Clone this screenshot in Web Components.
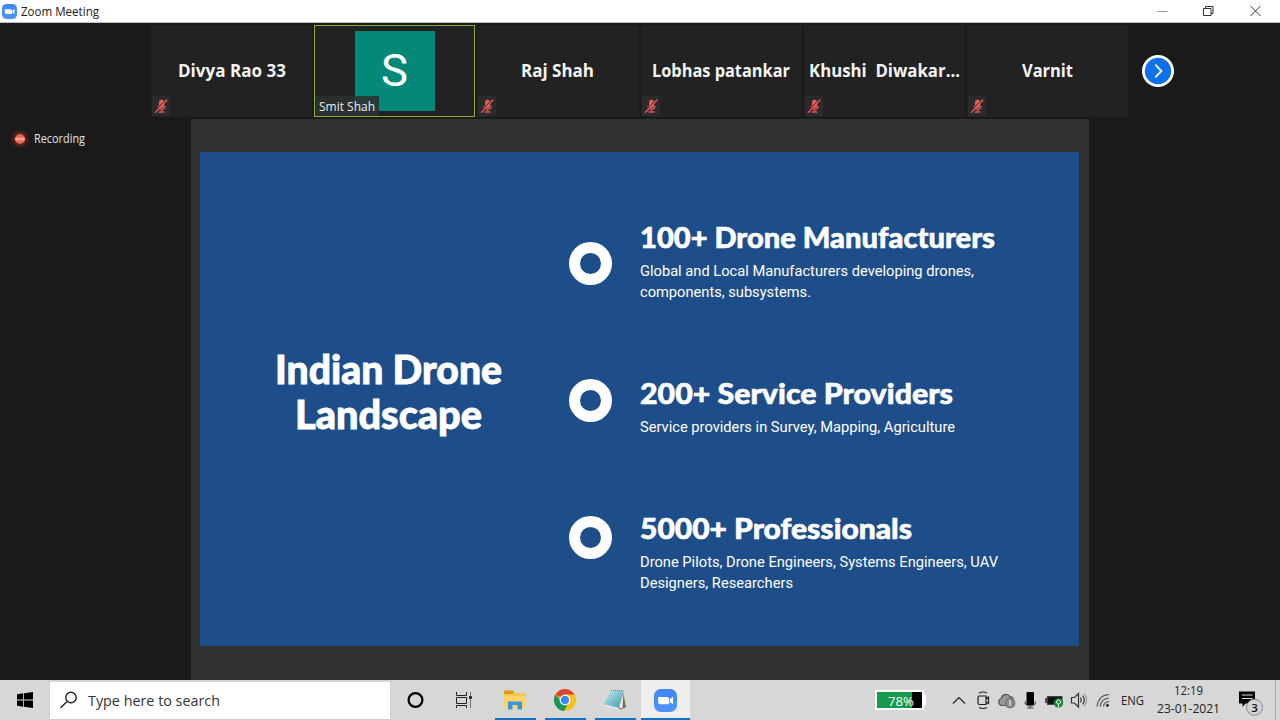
<!DOCTYPE html>
<html lang="en">
<head>
<meta charset="utf-8">
<title>Zoom Meeting</title>
<style>
html,body{margin:0;height:100%;overflow:hidden;background:#1a1a1a}
body{font-family:"Open Sans","Noto Sans",sans-serif}
</style>
</head>
<body>
<meeting-desktop></meeting-desktop>
<script>
const define=(name,html,ready)=>customElements.define(name,class extends HTMLElement{
  connectedCallback(){
    if(this.shadowRoot)return;
    this.attachShadow({mode:'open'}).innerHTML=typeof html==='function'?html(this):html;
    if(ready)ready(this);
  }
});

/* One line of text condensed or widened to a given width. */
define('fit-text',`<style>
:host{display:block;white-space:pre}
span{display:inline-block;transform-origin:0 50%}
</style><span><slot></slot></span>`,el=>{
  const w=parseFloat(el.getAttribute('w')),s=el.shadowRoot.querySelector('span');
  s.style.transform=`scaleX(${w/s.getBoundingClientRect().width})`;
  el.style.width=w+'px';
});

define('zoom-logo',el=>`<style>:host{display:block;flex:none}svg{display:block}</style>
<svg width="${el.getAttribute('size')}" height="${el.getAttribute('size')}" viewBox="0 0 22 22">
<defs><linearGradient id="g" x2="0" y2="1"><stop stop-color="#3f86f2"/><stop offset="1" stop-color="#5095ff"/></linearGradient></defs>
<rect width="22" height="22" rx="6.5" fill="url(#g)"/>
<path fill="#fff" d="M4 7.6h8.2a2.4 2.4 0 0 1 2.4 2.4v4.5H6.4A2.4 2.4 0 0 1 4 12.100zM15.300 9.600 18.200 7.500v7l-2.900-2z"/></svg>`);

define('title-bar',`<style>
:host{display:flex;align-items:center;height:22px;background:#fff;border-bottom:1px solid #bdbdbd;color:#222;font-size:12px;line-height:22px}
zoom-logo{margin:0 4px 0 2px}
fit-text{margin-top:2px}
svg{display:block;margin-left:auto}
</style>
<zoom-logo size="15"></zoom-logo><fit-text w="78">Zoom Meeting</fit-text>
<svg width="130" height="22" viewBox="1150 0 130 22" fill="none" stroke="#333">
<path d="M1157 11.500h10.500" stroke="#999"/><path d="M1203.500 8.500h7.500v7h-7.500zM1205.500 8V6.500h7.500v7h-2"/><path d="m1250.500 6 10 10m0-10-10 10"/></svg>`);

define('muted-badge',`<style>
:host{display:grid;place-items:center;width:18px;height:20px;background:#2b2b2b}svg{display:block}
</style><svg width="14" height="16" viewBox="0 0 14 16"><rect x="5" y="1.800" width="5.200" height="8" rx="2.600" fill="#f25a5a"/>
<path d="M4 8c0 4 7.200 4 7.200 0M7.600 11v2.500M4.500 14h6" fill="none" stroke="#e05252" stroke-width="1.300"/><path d="M12.400 1.400 1 14" stroke="#2b2b2b" stroke-width="1.400"/><path d="M13.200 1.800 1 14.800" stroke="#ee5858" stroke-width="1.300"/></svg>`);

define('participant-tile',el=>`<style>
:host{position:relative;display:grid;place-items:center;box-sizing:border-box;height:92px;background:#222;color:#f4f4f4}
:host([active]){border:1.500px solid #86ad2c}
.name{font:700 17px/24px "Open Sans",sans-serif}
muted-badge{position:absolute;left:1px;bottom:1px}
.avatar{display:grid;place-items:center;width:80px;height:80px;margin-top:-1px;background:#048978;color:#fff;font:400 45px/80px Roboto,sans-serif}
.tag{position:absolute;left:0;bottom:0;padding:0 4px;height:20px;background:#2c3030dd;font:400 12px/21px "Open Sans",sans-serif;color:#eee}
</style>${el.hasAttribute('active')
 ?`<div class="avatar"><fit-text w="27">S</fit-text></div><div class="tag"><fit-text w="56">${el.getAttribute('name')}</fit-text></div>`
 :`<fit-text class="name" w="${el.getAttribute('w')}">${el.getAttribute('name')}</fit-text><muted-badge></muted-badge>`}`);

define('gallery-strip',`<style>
:host{display:flex;align-items:center;box-sizing:border-box;padding:2px 0 0 151px;height:94px}
.tiles{display:grid;grid-template-columns:repeat(6,1fr);gap:2px;width:977px}
svg{display:block;margin-left:13px}
</style><div class="tiles">
<participant-tile name="Divya Rao 33" w="108"></participant-tile>
<participant-tile name="Smit Shah" active></participant-tile>
<participant-tile name="Raj Shah" w="73"></participant-tile>
<participant-tile name="Lobhas patankar" w="138"></participant-tile>
<participant-tile name="Khushi  Diwakar..." w="151"></participant-tile>
<participant-tile name="Varnit" w="51"></participant-tile>
</div><svg width="34" height="34" viewBox="0 0 34 34"><circle cx="17" cy="17" r="16" fill="#fff"/><circle cx="17" cy="17" r="13.200" fill="#0e71eb"/><path d="m14.800 11.200 5.600 5.800-5.600 5.800" fill="none" stroke="#fff" stroke-width="1.800" stroke-linecap="round"/></svg>`);

define('recording-label',`<style>
:host{display:flex;align-items:center;gap:9px;height:20px;color:#e4e4e4;font-size:12px;line-height:20px}
i{width:10px;height:10px;margin:0 0 0 15px;border-radius:50%;background:linear-gradient(#f0604e 30%,#ffb3a2 50%,#f0604e 75%);box-shadow:0 0 4px 2px #b8351b99}
</style><i></i><fit-text w="51">Recording</fit-text>`);

define('slide-point',el=>`<style>
:host{display:grid;grid-template-columns:43px 1fr;column-gap:28px;align-items:start;color:#fff}
.ring{box-sizing:border-box;width:43px;height:43px;border:11.500px solid #fff;border-radius:50%;margin-top:${el.getAttribute('ring')}px}
.head{font:900 29px/34px Lato,sans-serif;-webkit-text-stroke:.6px #fff;padding-top:1px}
.body{font:400 15px/20.500px Roboto,sans-serif;padding-top:7px}
</style><div class="ring"></div><div><fit-text class="head" w="${el.getAttribute('w')}">${el.getAttribute('head')}</fit-text>
<div class="body">${el.getAttribute('lines').split('|').map(l=>{const[t,w]=l.split('@');return`<fit-text w="${w}">${t}</fit-text>`}).join('')}</div></div>`);

define('shared-slide',`<style>
:host{display:grid;grid-template-columns:368.500px 1fr;width:879px;height:494px;background:#1e4e89;color:#fff}
.title{display:flex;flex-direction:column;align-items:center;padding:195px 0 0 8px;font:900 39px/44.500px Lato,sans-serif;-webkit-text-stroke:.8px #fff}
.points{display:grid;grid-template-rows:156px 135px auto;padding-top:67px}
</style>
<div class="title"><fit-text w="227">Indian Drone</fit-text><fit-text w="187">Landscape</fit-text></div>
<div class="points">
<slide-point ring="22.500" head="100+ Drone Manufacturers" w="355" lines="Global and Local Manufacturers developing drones,@334|components, subsystems.@171"></slide-point>
<slide-point ring="3.500" head="200+ Service Providers" w="313" lines="Service providers in Survey, Mapping, Agriculture@315"></slide-point>
<slide-point ring="6" head="5000+ Professionals" w="272" lines="Drone Pilots, Drone Engineers, Systems Engineers, UAV@358|Designers, Researchers@153"></slide-point>
</div>`);

define('meeting-view',`<style>
:host{display:flex;flex-direction:column;background:#1a1a1a}
.main{display:grid;grid-template-columns:191px 898px 1fr;flex:1;padding-top:2px}
recording-label{margin-top:10px}
.stage{display:flex;align-items:flex-start;background:#313131;padding:33px 0 0 9px}
</style><gallery-strip></gallery-strip>
<div class="main"><recording-label></recording-label><div class="stage"><shared-slide></shared-slide></div></div>`);

define('search-box',`<style>
:host{display:flex;align-items:center;box-sizing:border-box;width:342px;height:39px;background:#fff;border:1px solid #cfcfcf;color:#333;font-size:15px}
svg{margin:0 9px 0 9px}
</style><svg width="20" height="20" viewBox="0 0 20 20" fill="none" stroke="#222" stroke-width="1.400"><circle cx="12" cy="7.500" r="5.200"/><path d="m8 11.500-6.500 6.500"/></svg>
<fit-text w="132">Type here to search</fit-text>`);

define('task-button',`<style>
:host{display:grid;place-items:center;position:relative;width:50px;height:40px}
:host([active]){background:#eee}
:host([open])::after{content:"";position:absolute;left:5px;right:4px;bottom:0;height:2px;background:#0b74c8}
:host([active])::after{left:0;right:0}
</style><slot></slot>`);

define('battery-meter',`<style>
:host{display:flex;align-items:center}
.b{position:relative;box-sizing:border-box;width:49px;height:20px;border:2px solid #fff;background:linear-gradient(90deg,#169b4b 78%,#000 78%);color:#fff;font-size:13px;line-height:18px;padding-left:11px}
.cap{width:2px;height:10px;background:#fff}
</style><div class="b"><fit-text w="26">78%</fit-text></div><div class="cap"></div>`);

define('task-bar',`<style>
:host{display:flex;align-items:center;height:40px;background:#d7d7d7;color:#222}
svg{display:block;flex:none}
.start{width:49px;display:grid;place-items:center}
.apps{display:flex;margin-left:0}
task-button.s{width:48px}
battery-meter{margin-left:185px}
.tray{margin-left:24px}
.lang{font-size:12px;margin-left:6px}
.clock{display:flex;flex-direction:column;align-items:center;width:64px;margin-left:12px;font-size:12px;line-height:18px}
.note{margin-left:16px}
.edge{width:1px;height:40px;background:#aaa;margin-left:auto;margin-right:4px}
</style>
<div class="start"><svg width="16" height="16" viewBox="0 0 16 16"><path d="M0 2.200 6.200 1.300v6.300H0zM7 1.200 16 0v7.600H7zM0 8.400h6.200v6.300L0 13.800zM7 8.400h9V16l-9-1.200z"/></svg></div>
<search-box></search-box>
<div class="apps">
<task-button class="s"><svg width="18" height="18" viewBox="0 0 18 18"><circle cx="9.500" cy="9" r="6.900" fill="none" stroke="#000" stroke-width="2.200"/></svg></task-button>
<task-button class="s"><svg width="18" height="18" viewBox="0 0 18 18" fill="none" stroke="#222"><path d="M2.500 1v3.500h10V1M2.500 6.500h10v6h-10zM2.500 17v-2.500h10V17"/><path d="M16.500 1v16" stroke="#777"/><path d="M15 6.500h3" stroke-width="2.500"/></svg></task-button>
<task-button open style="margin-left:3px"><svg width="22" height="20" viewBox="0 0 22 20"><path d="M0 1.500Q0 .5 1 .5h7.500l2 2.500H21q1 0 1 1v14H0z" fill="#f8c84b"/><path d="M0 1.500Q0 .5 1 .5h7.500l1.500 2-1 1.500H0z" fill="#d79b1f"/><path d="M0 6h22v12H0z" fill="#fbd468"/><path d="M4 19.500v-8h14v8h-4.500V15h-5v4.500z" fill="#3b95d6"/></svg></task-button>
<task-button open><svg width="22" height="22" viewBox="0 0 22 22"><circle cx="11" cy="11" r="11" fill="#fbc116"/><path d="M11 11 1.500 5.500A11 11 0 0 1 20.500 5.500H11z" fill="#db4437"/><path d="M1.500 5.500A11 11 0 0 0 10 22l5-8.500L11 11H6.200z" fill="#159957"/><circle cx="11" cy="11" r="5.400" fill="#fff"/><circle cx="11" cy="11" r="4.200" fill="#4285f4"/></svg></task-button>
<task-button open><svg width="24" height="22" viewBox="0 0 24 22"><defs><linearGradient id="n" x2="1" y2="1"><stop stop-color="#c7edf0"/><stop offset="1" stop-color="#3b98ad"/></linearGradient></defs><path d="M20 2.500 23 18l-4.500 2.500-3-1z" fill="#826b46"/><path d="m20.500 3-1 16.500-3.500-1z" fill="#eee"/><path d="M8 1.500h12.500L15.500 19 .8 15.500z" fill="url(#n)"/><path d="m.8 15.500 14.700 3.500-.3 1L.8 16.500z" fill="#eee"/><path d="M8 1.500h12.500" stroke="#777" stroke-width="1.200" stroke-dasharray="1 1"/></svg></task-button>
<task-button open active style="width:49px;margin-left:1px"><zoom-logo size="23"></zoom-logo></task-button>
</div>
<battery-meter></battery-meter>
<svg class="tray" width="165" height="22" viewBox="950 689 165 22" fill="none" stroke="#222" stroke-width="1.200">
<path d="m953 703.500 6-6 6 6"/>
<path d="M979.500 696h6.500v8.500h-6.500q-1.500 0-1.500-1.500v-5.500q0-1.500 1.500-1.500zM986 698.500l2.500-1.500v6.500l-2.500-1.500M979 693q4-2 8 0M979 707.500q4 2 8 0"/>
<path d="M1002 705.500a3.600 3.600 0 0 1-.8-7 4.800 4.800 0 0 1 8.800-1.800 4 4 0 0 1 3.500 4.300l-2 4.500z" fill="#999" stroke="#555"/><circle cx="1010" cy="703" r="4.800" fill="#888" stroke="#777"/><path d="M1010 700v6" stroke="#ddd" stroke-width="1.500"/>
<rect x="1026.500" y="692" width="7.500" height="13" rx="1" fill="#000" stroke="none"/><path d="M1025 701.500c0 6 10.500 6 10.500 0M1030.200 705v3M1027 708h6.500" stroke="#444"/>
<path d="M1047.500 696.500h14.500v8h-14.500z" fill="#111" stroke="#444"/><path d="M1046 698v5" stroke-width="1.500"/><circle cx="1058.500" cy="703" r="4.700" fill="#12902e" stroke="none"/><path d="M1058.500 707v-3a2 2 0 1 1 .1 0" stroke="#fff" stroke-width="1"/>
<path d="M1071.500 697.500h3l4-4v13.500l-4-4h-3zM1080.500 697.500q1.500 2.500 0 5M1082.700 695.500q3 4.500 0 9" stroke="#333"/><path d="M1084.500 693.500q4 6.500 0 13" stroke="#999"/>
<path d="M1097 706.500q1.500-11.500 12-12M1100.200 706.500q1-8 8.800-8.500M1103.500 706.500q.6-4.500 5.500-5" stroke="#555"/><circle cx="1107.500" cy="705.500" r="1.400" fill="#222" stroke="none"/>
</svg>
<fit-text class="lang" w="23">ENG</fit-text>
<div class="clock"><fit-text w="29">12:19</fit-text><fit-text w="63">23-01-2021</fit-text></div>
<svg class="note" width="28" height="32" viewBox="1236 684 28 32"><path d="M1239 691.500h16v12h-9.500l-3 3.500v-3.500h-3.500z" fill="#000"/><path d="M1242 695h10.500M1242 698.500h10.500" stroke="#ddd"/><circle cx="1254.500" cy="707.300" r="8" fill="#d3d3d3" stroke="#888"/><text x="1254.500" y="711.500" text-anchor="middle" font-size="11.500" font-weight="600" fill="#111">3</text></svg>
<div class="edge"></div>`);

define('meeting-desktop',`<style>
:host{display:grid;grid-template-rows:23px 1fr 40px;width:1280px;height:720px}
</style><title-bar></title-bar><meeting-view></meeting-view><task-bar></task-bar>`);
</script>
</body>
</html>
